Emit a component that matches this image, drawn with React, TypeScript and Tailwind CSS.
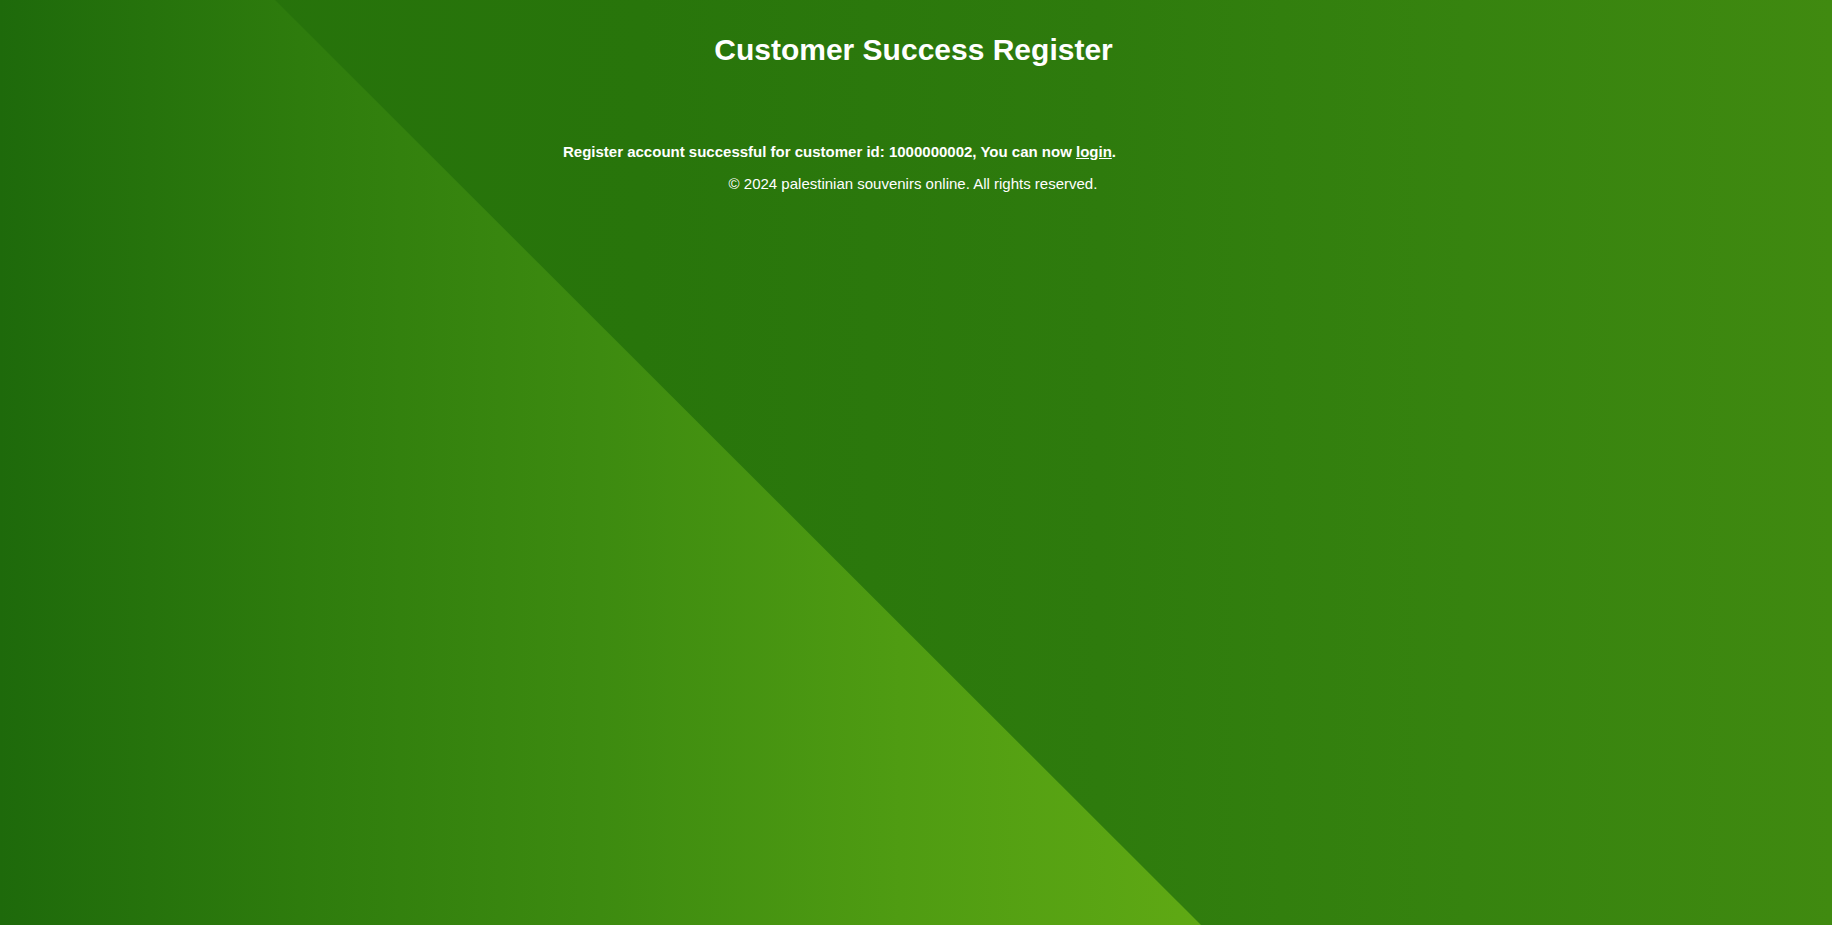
import React from "react";

function Backdrop() {
  return (
    <svg
      className="absolute inset-0 h-full w-full"
      viewBox="0 0 1832 925"
      preserveAspectRatio="none"
      aria-hidden="true"
    >
      <defs>
        <linearGradient id="bgRight" x1="0" y1="0" x2="1832" y2="0" gradientUnits="userSpaceOnUse">
          <stop offset="0" stopColor="#25710b" />
          <stop offset="0.35" stopColor="#28750b" />
          <stop offset="0.6" stopColor="#2e7b0d" />
          <stop offset="0.8" stopColor="#36830f" />
          <stop offset="1" stopColor="#408a10" />
        </linearGradient>
        <linearGradient id="bgLeft" x1="0" y1="0" x2="1200" y2="0" gradientUnits="userSpaceOnUse">
          <stop offset="0" stopColor="#1e6a0b" />
          <stop offset="0.25" stopColor="#2e7c0d" />
          <stop offset="0.5" stopColor="#3d8b10" />
          <stop offset="0.75" stopColor="#4f9c12" />
          <stop offset="1" stopColor="#5fa914" />
        </linearGradient>
      </defs>
      <rect x="0" y="0" width="1832" height="925" fill="url(#bgRight)" />
      <polygon points="0,0 275,0 1201,925 0,925" fill="url(#bgLeft)" />
    </svg>
  );
}

function App() {
  return (
    <div
      className="relative h-screen w-full overflow-hidden text-white"
      style={{ fontFamily: '"Liberation Sans", Arial, sans-serif' }}
    >
      <Backdrop />
      <div className="relative flex flex-col pt-[8px]">
        <h1 className="mt-[25px] pr-[5px] text-center text-[30px] font-bold leading-[34px]">
          Customer Success Register
        </h1>
        <div className="mt-[76px] pl-[563px] text-[15px] font-bold leading-[17px]">
          Register account successful for customer id: 1000000002, You can now{" "}
          <a href="#" className="underline">
            login
          </a>
          .
        </div>
        <p className="mt-[15px] pr-[6px] text-center text-[15px] leading-[17px]">
          © 2024 palestinian souvenirs online. All rights reserved.
        </p>
      </div>
    </div>
  );
}

export default App;
